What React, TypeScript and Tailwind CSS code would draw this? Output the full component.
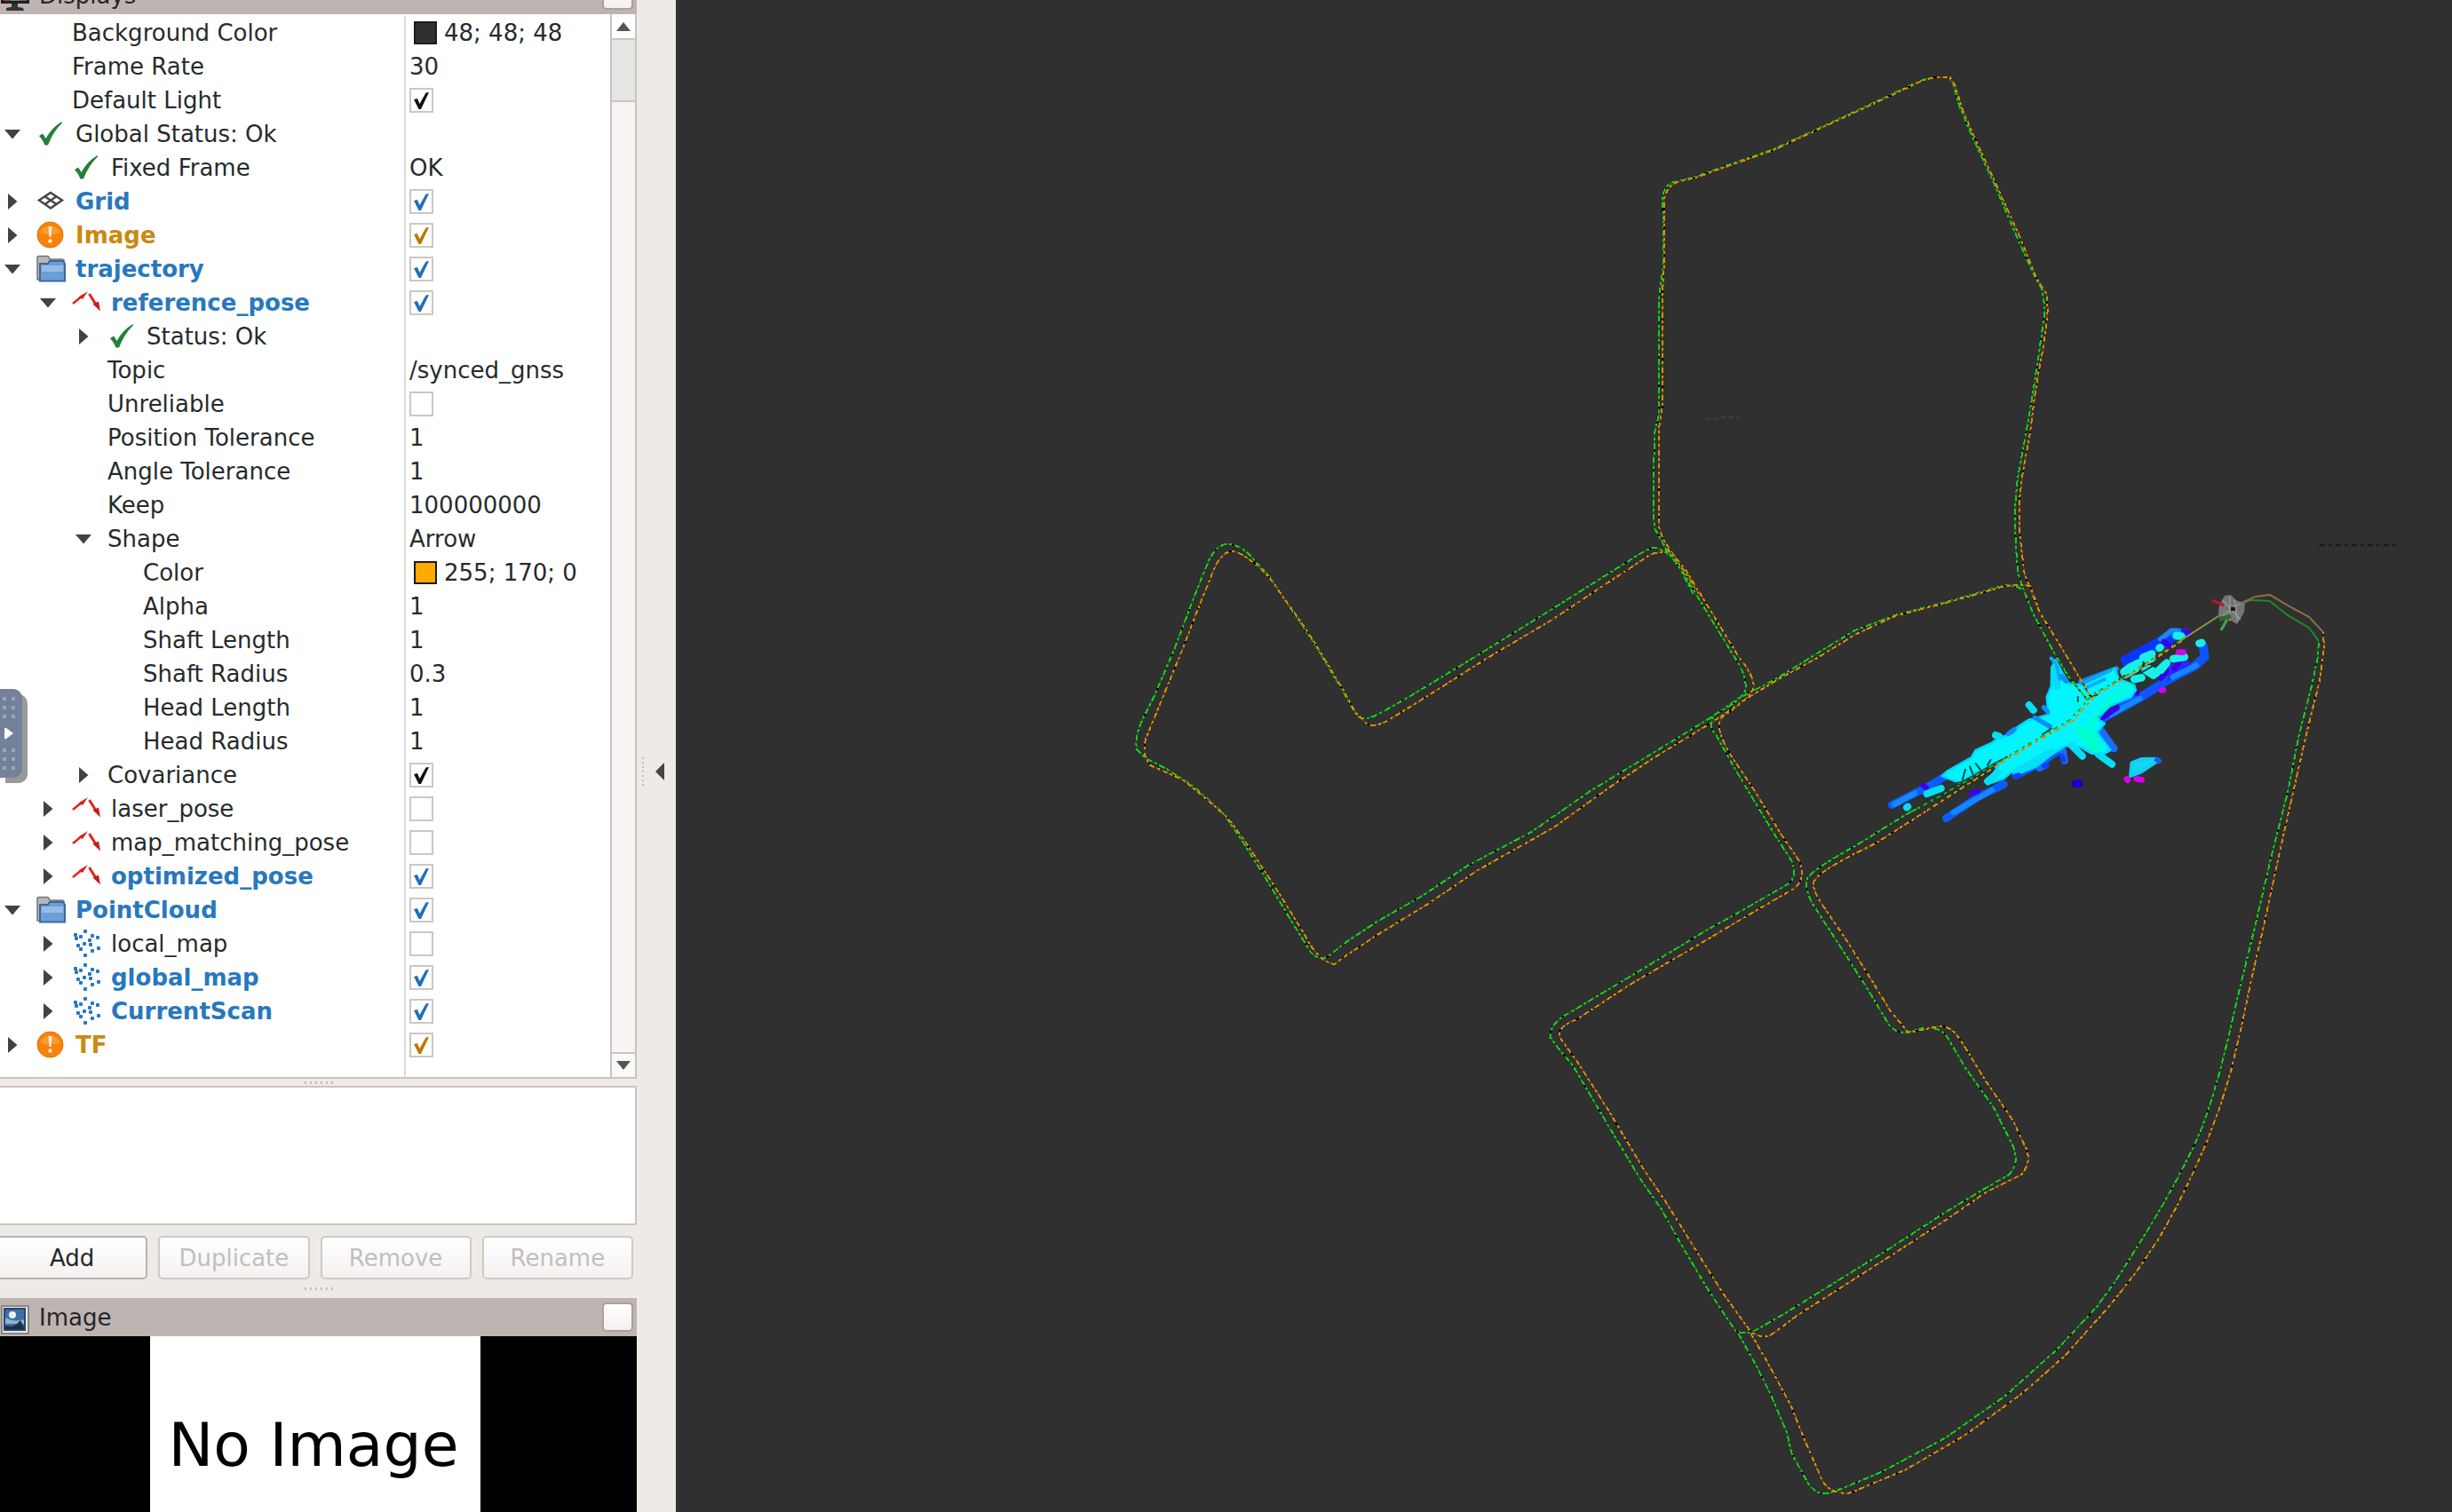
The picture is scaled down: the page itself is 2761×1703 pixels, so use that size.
import { useState } from "react";
import type { ReactNode } from "react";

type IconName = "ok" | "grid" | "warn" | "folder" | "pose" | "cloud";
type Tone = "plain" | "blue" | "gold";
type Row = {
  name: string;
  depth: number;
  icon?: IconName;
  open?: boolean;
  tone?: Tone;
  value?: string;
  swatch?: "dark" | "orange";
  checked?: boolean;
};

const rows: Row[] = [
  { name: "Background Color", depth: 1, value: "48; 48; 48", swatch: "dark" },
  { name: "Frame Rate", depth: 1, value: "30" },
  { name: "Default Light", depth: 1, checked: true },
  { name: "Global Status: Ok", depth: 0, icon: "ok", open: true },
  { name: "Fixed Frame", depth: 1, icon: "ok", value: "OK" },
  { name: "Grid", depth: 0, icon: "grid", open: false, tone: "blue", checked: true },
  { name: "Image", depth: 0, icon: "warn", open: false, tone: "gold", checked: true },
  { name: "trajectory", depth: 0, icon: "folder", open: true, tone: "blue", checked: true },
  { name: "reference_pose", depth: 1, icon: "pose", open: true, tone: "blue", checked: true },
  { name: "Status: Ok", depth: 2, icon: "ok", open: false },
  { name: "Topic", depth: 2, value: "/synced_gnss" },
  { name: "Unreliable", depth: 2, checked: false },
  { name: "Position Tolerance", depth: 2, value: "1" },
  { name: "Angle Tolerance", depth: 2, value: "1" },
  { name: "Keep", depth: 2, value: "100000000" },
  { name: "Shape", depth: 2, open: true, value: "Arrow" },
  { name: "Color", depth: 3, value: "255; 170; 0", swatch: "orange" },
  { name: "Alpha", depth: 3, value: "1" },
  { name: "Shaft Length", depth: 3, value: "1" },
  { name: "Shaft Radius", depth: 3, value: "0.3" },
  { name: "Head Length", depth: 3, value: "1" },
  { name: "Head Radius", depth: 3, value: "1" },
  { name: "Covariance", depth: 2, open: false, checked: true },
  { name: "laser_pose", depth: 1, icon: "pose", open: false, checked: false },
  { name: "map_matching_pose", depth: 1, icon: "pose", open: false, checked: false },
  { name: "optimized_pose", depth: 1, icon: "pose", open: false, tone: "blue", checked: true },
  { name: "PointCloud", depth: 0, icon: "folder", open: true, tone: "blue", checked: true },
  { name: "local_map", depth: 1, icon: "cloud", open: false, checked: false },
  { name: "global_map", depth: 1, icon: "cloud", open: false, tone: "blue", checked: true },
  { name: "CurrentScan", depth: 1, icon: "cloud", open: false, tone: "blue", checked: true },
  { name: "TF", depth: 0, icon: "warn", open: false, tone: "gold", checked: true },
];

const indents = ["pl-0", "pl-[40px]", "pl-[80px]", "pl-[120px]"];
const toneText: Record<Tone, string> = {
  plain: "text-[#262b2b]",
  blue: "font-bold text-[#2878bd]",
  gold: "font-bold text-[#c98a12]",
};
const toneTick: Record<Tone, string> = {
  plain: "text-[#101010]",
  blue: "text-[#1f70b8]",
  gold: "text-[#bd7800]",
};

function RowIcon({ name }: { name: IconName }) {
  const box = "block h-[32px] w-[34px] shrink-0";
  switch (name) {
    case "ok":
      return (
        <svg viewBox="0 0 34 32" className={box} aria-hidden="true">
          <path d="M3 18 L7 15.500 Q9 18 10.500 21 Q17 9 28.500 2 L29 3.500 Q19 13 13 28.500 L9.500 28.500 Q7 22 3 18 Z" fill="#25803a" />
        </svg>
      );
    case "grid":
      return (
        <svg viewBox="0 0 34 32" className={box} aria-hidden="true">
          <path d="M16 6 L29 14.500 L16 23.500 L3 14.500 Z M9.500 10.200 L22.500 19 M22.500 10.200 L9.500 19" fill="none" stroke="#454545" strokeWidth="2.400" />
        </svg>
      );
    case "warn":
      return (
        <svg viewBox="0 0 34 32" className={box} aria-hidden="true">
          <circle cx="15.500" cy="15.500" r="14.500" fill="#f98308" stroke="#e0720c" />
          <path d="M4 13 A12.500 12.500 0 0 1 27 13 Q15.500 18 4 13 Z" fill="#fcaa4f" opacity="0.6" />
          <path d="M13.500 6 h4 l-0.800 12 h-2.400 Z" fill="#ffe9cf" />
          <circle cx="15.500" cy="22.500" r="2.200" fill="#ffe9cf" />
        </svg>
      );
    case "folder":
      return (
        <svg viewBox="0 0 34 32" className={box} aria-hidden="true">
          <path d="M1 28 V3 Q1 1.500 3 1.500 H12 Q14 1.500 15 5 H29 Q31 5 31 7 V28 Z" fill="#b9b8b2" stroke="#74747a" strokeWidth="1.500" />
          <path d="M4 29.500 V10 H13 L15 7 H30 L32 10 V29.500 Z" fill="#6c9ed8" stroke="#3c67a0" strokeWidth="2" />
          <path d="M6 12 H30 V19 H6 Z" fill="#a9c8ec" opacity="0.7" />
        </svg>
      );
    case "pose":
      return (
        <svg viewBox="0 0 34 32" className={box} aria-hidden="true">
          <path d="M1 17 L12 8" stroke="#e0241c" strokeWidth="2.500" />
          <path d="M7.500 9.500 L18 3 L12 12 Z" fill="#d8211a" />
          <path d="M19.500 6 L27 18" stroke="#e0241c" strokeWidth="3" />
          <path d="M23.500 17.500 L30 14.500 L32 25.500 Z" fill="#c41c18" />
        </svg>
      );
    case "cloud":
      return (
        <svg viewBox="0 0 34 32" className={box} aria-hidden="true">
          <g fill="#2678c4">
            {[
              [13, 0], [2, 4], [8, 6], [21, 5], [27, 7], [3, 8], [12, 14], [18, 10], [19, 15],
              [5, 16], [8, 20], [21, 22], [28, 19], [13, 27],
            ].map(([x, y]) => (
              <rect key={`${x}-${y}`} x={x} y={y} width="4" height="4" rx="1" />
            ))}
          </g>
        </svg>
      );
  }
}

function CheckBox({ label, initial, tone }: { label: string; initial: boolean; tone: Tone }) {
  const [on, setOn] = useState(initial);
  return (
    <span className="grid w-[27px] place-items-center">
      <input
        type="checkbox"
        aria-label={label}
        checked={on}
        onChange={() => setOn(!on)}
        className="col-start-1 row-start-1 h-[28px] w-[27px] appearance-none border-2 border-[#cbc8c2] bg-white"
      />
      {on && (
        <svg viewBox="0 0 27 28" className={`pointer-events-none col-start-1 row-start-1 h-[28px] w-[27px] ${toneTick[tone]}`} aria-hidden="true">
          <path d="M5 13 L9 12 L11.500 18 L18.500 5.500 L22 5 L13 24 L10.500 24 Z" fill="currentColor" />
        </svg>
      )}
    </span>
  );
}

function TreeRow({ row }: { row: Row }) {
  const [open, setOpen] = useState(row.open ?? false);
  const tone = row.tone ?? "plain";
  return (
    <tr className="h-[38px]">
      <th scope="row" className="p-0 text-left font-normal">
        <div className={`flex h-[38px] items-center ${indents[row.depth]}`}>
          {row.open === undefined ? (
            <span className="w-[41px] shrink-0" />
          ) : (
            <button type="button" aria-label={`Toggle ${row.name}`} aria-expanded={open} onClick={() => setOpen(!open)} className="flex w-[41px] shrink-0 pl-1">
              <svg viewBox="0 0 20 20" className="h-[20px] w-[20px]" aria-hidden="true">
                {open ? <path d="M1 5 H19 L10 15.500 Z" fill="#424242" /> : <path d="M5 1 V19 L15.500 10 Z" fill="#424242" />}
              </svg>
            </button>
          )}
          {row.icon && (
            <span className="mr-[10px]">
              <RowIcon name={row.icon} />
            </span>
          )}
          <span className={`whitespace-nowrap ${toneText[tone]}`}>{row.name}</span>
        </div>
      </th>
      <td className="border-l-2 border-[#dcdcdc] p-0 pl-[4px]">
        <div className="flex items-center">
          {row.swatch === "dark" && <span className="mr-[8px] ml-[5px] h-[26px] w-[26px] border-2 border-[#1c1c1c] bg-[#303030]" />}
          {row.swatch === "orange" && <span className="mr-[8px] ml-[5px] h-[26px] w-[26px] border-2 border-[#1c1c1c] bg-[#ffaa00]" />}
          {row.checked !== undefined && <CheckBox label={row.name} initial={row.checked} tone={tone} />}
          {row.value && <span className="whitespace-nowrap text-[#262b2b]">{row.value}</span>}
        </div>
      </td>
    </tr>
  );
}

function ScrollBar() {
  return (
    <div className="flex w-[28px] shrink-0 flex-col border-l-2 border-[#c9c4c1] bg-[#f8f4f4]">
      <button type="button" aria-label="Scroll up" className="flex h-[27px] shrink-0 items-center justify-center bg-white">
        <svg viewBox="0 0 16 10" className="h-[10px] w-[16px]" aria-hidden="true">
          <path d="M0 10 H16 L8 0 Z" fill="#555" />
        </svg>
      </button>
      <div className="h-[72px] shrink-0 border-y-2 border-[#c9c7c4] bg-[#e5e5e4]" />
      <div className="grow" />
      <button type="button" aria-label="Scroll down" className="flex h-[28px] shrink-0 items-center justify-center border-t-2 border-[#c9c4c1] bg-[#faf9f8]">
        <svg viewBox="0 0 16 10" className="h-[10px] w-[16px]" aria-hidden="true">
          <path d="M0 0 H16 L8 10 Z" fill="#555" />
        </svg>
      </button>
    </div>
  );
}

function Grip() {
  return (
    <div className="flex justify-center gap-[4px]">
      {[0, 1, 2, 3, 4, 5].map((i) => (
        <span key={i} className="h-[3px] w-[2px] bg-[#c3bfbb]" />
      ))}
    </div>
  );
}

function DockHeader({ title, icon }: { title: string; icon: ReactNode }) {
  return (
    <div className="flex h-[43px] shrink-0 items-center bg-[#beb4b2] pr-[4px]">
      {icon}
      <h2 className="grow pl-[8px] text-[#262626]">{title}</h2>
      <button type="button" aria-label={`Close ${title}`} className="h-[33px] w-[35px] rounded-[5px] border-2 border-[#aaa19e] bg-linear-to-b from-white to-[#f3f0ef]" />
    </div>
  );
}

const tracks: { d: string; g?: boolean; soft?: boolean }[] = [
  // northern loop
  { g: true, d: "M1907 669 L1886 629 L1878 621 L1864 596 L1862 582 L1862 540 L1864 485 L1868 469 L1868 339 L1870 323 L1873 303 L1874 248 L1872 228 Q1873 206 1888 205 L1911 199 L1950 185 L1996 169 L2050 144 L2104 119 L2157 94 Q2172 86 2195 87 L2200 97 L2207 121 L2221 154 L2246 208 L2273 271 L2291 311 L2300 327 L2303 350 L2299 378 L2295 406 L2289 445 L2280 497 L2272 540 L2269 572 L2270 615 L2273 647 L2279 665 L2290 692 L2312 733 L2330 763 L2352 790" },
  { d: "M1914 669 L1886 627 L1873 607 L1868 592 L1868 485 L1872 460 L1872 339 L1874 303 L1874 228 Q1876 210 1890 205 L1911 200 L1950 186 L1996 170 L2050 145 L2104 120 L2157 95 Q2174 86 2196 87 L2202 97 L2209 121 L2223 154 L2248 208 L2275 268 L2293 313 L2305 332 L2306 350 L2302 386 L2296 418 L2291 449 L2286 489 L2278 532 L2274 564 L2274 596 L2277 623 L2280 647 L2288 667 L2297 690 L2320 727 L2344 767 L2355 786" },
  // western loop
  { g: true, d: "M1880 625 Q1868 616 1860 617 L1847 624 L1750 685 L1663 739 L1587 785 L1559 801 Q1535 815 1528 805 L1513 779 L1480 724 L1462 697 L1429 648 L1413 631 Q1398 613 1383 613 Q1371 613 1362 631 L1345 673 L1324 729 L1301 783 L1286 813 Q1278 832 1281 844 L1291 854 L1316 867 L1345 886 L1378 916 L1398 945 L1424 986 L1454 1036 L1472 1065 Q1480 1082 1495 1078 L1515 1062 L1551 1038 L1602 1009 L1653 975 L1725 937 L1791 891 L1852 854 L1924 810 L1959 786 L2000 765 L2040 740 L2089 710 L2134 693 L2192 678 L2245 663 Q2265 655 2279 665" },
  { d: "M1880 620 L1860 624 L1801 663 L1750 697 L1674 742 L1592 794 L1561 813 Q1545 820 1538 814 L1526 801 L1513 777 L1481 724 L1463 697 L1431 652 L1421 641 Q1396 620 1388 621 Q1374 622 1365 648 L1350 685 L1332 732 L1311 783 L1291 832 Q1286 850 1296 862 L1332 878 L1357 898 L1383 921 L1403 948 L1439 1003 L1470 1053 Q1484 1082 1503 1086 L1515 1077 L1556 1050 L1607 1019 L1663 981 L1709 955 L1750 932 L1811 888 L1862 854 L1926 815 L1970 785 L2005 764 L2045 742 L2089 715 L2134 694 L2192 679 L2245 664 Q2262 657 2286 660 L2295 683" },
  // central connector and southern block
  { g: true, d: "M1875 618 L1893 641 L1924 692 L1954 741 Q1967 760 1966 776 Q1964 788 1934 803 Q1920 814 1934 830 L1954 866 L1975 901 L2000 942 L2018 970 Q2025 988 2013 996 L1954 1030 L1923 1047 L1834 1101 L1767 1141 Q1746 1152 1746 1168 L1758 1184 L1771 1199 L1807 1260 L1847 1327 L1872 1363 L1892 1399 L1923 1451 L1954 1498 Q1965 1504 1977 1498 L2012 1478 L2128 1406 L2191 1365 L2236 1338 L2262 1323 Q2275 1310 2267 1291 L2245 1247 L2213 1202 L2193 1168 Q2184 1154 2160 1159 Q2140 1168 2128 1155 L2102 1112 L2079 1076 L2044 1022 Q2032 1003 2035 990 Q2040 980 2089 953 L2147 917 L2161 910" },
  { d: "M1878 618 L1898 641 L1929 692 L1959 741 Q1976 762 1975 774 Q1974 784 1939 808 Q1930 818 1949 850 L1975 889 L2005 938 L2026 969 Q2035 990 2020 1001 L1970 1030 L1923 1058 L1834 1110 L1776 1148 Q1750 1158 1758 1170 L1776 1195 L1812 1251 L1852 1318 L1874 1350 L1910 1408 L1941 1457 L1972 1500 Q1985 1508 1995 1503 L2026 1480 L2128 1415 L2191 1374 L2236 1343 L2276 1323 Q2288 1310 2282 1294 L2267 1262 L2236 1217 L2207 1170 Q2196 1154 2182 1156 L2149 1163 L2128 1137 L2106 1101 L2079 1058 L2053 1020 Q2037 996 2045 990 Q2050 980 2112 950 L2170 913" },
  // outer south-eastern arc
  { g: true, d: "M1958 1502 L1977 1536 L1995 1572 L2012 1612 L2018 1637 L2035 1668 Q2044 1683 2057 1682 L2075 1676 L2120 1657 L2191 1619 L2258 1572 L2316 1520 L2361 1472 L2384 1440 L2415 1391 L2436 1356 L2452 1327 L2469 1294 L2480 1269 L2490 1240 L2499 1209 L2508 1174 L2520 1122 L2529 1085 L2539 1045 L2558 963 L2576 893 L2589 827 L2603 773 L2610 740 L2611 722" },
  { d: "M1972 1502 L1990 1533 L2017 1583 L2033 1623 L2048 1657 Q2056 1684 2084 1681 L2146 1655 L2213 1616 L2280 1567 L2325 1527 L2370 1477 L2385 1459 L2408 1429 L2431 1395 L2452 1357 L2470 1320 L2485 1286 L2500 1246 L2512 1207 L2524 1156 L2537 1095 L2548 1048 L2567 960 L2585 880 L2598 823 L2612 767 L2617 730 L2616 712" },
  // turn next to the vehicle
  { g: true, soft: true, d: "M2522 680 L2536 676 L2556 677 L2576 693 L2600 707 L2611 722" },
  { soft: true, d: "M2522 680 L2540 672 L2556 670 L2576 682 L2600 695 L2616 712" },
];

function PointCloud() {
  return (
    <g transform="translate(2110 690) scale(0.3333)" strokeLinecap="round" strokeLinejoin="round" fill="none">
      {/* far ends of the scan */}
      <path d="M62 650 L180 590 L330 500 M245 695 L350 625 L440 580 M480 550 L560 510 L620 470" stroke="#0a5cff" strokeWidth="26" />
      <path d="M838 155 L985 75 L1015 58 L1062 60 L1070 75 L1045 72 L990 112 L850 178 Z" fill="#0a35ff" stroke="#0a35ff" strokeWidth="10" />
      <path d="M770 358 L850 315 L920 275 L985 232 L1085 180 L1118 150 L1112 110" stroke="#0d55ff" strokeWidth="30" />
      <path d="M1000 185 L1050 165 L1070 180 L1000 222 Z" fill="#2a2cff" stroke="#2a2cff" strokeWidth="14" />
      <path d="M970 90 L1005 62 L1030 62 M70 648 L140 610 M270 675 L400 600 M800 345 L900 290 M1010 218 L1090 178 M700 235 L820 190 M460 408 L530 365" stroke="#1688ff" strokeWidth="18" />
      <path d="M980 98 L1000 112 M770 357 L822 322 M330 612 L352 603 M1050 66 L1068 70 M990 200 L970 222 M1030 172 L1015 190 M875 268 L890 272 M168 584 L178 592" stroke="#3c00e6" strokeWidth="18" />
      <path d="M770 400 L812 460 M640 470 L645 500 M560 525 L580 515" stroke="#1a6dff" strokeWidth="24" />
      {/* dense centre */}
      <path d="M232 552 L250 535 L330 490 L345 465 L400 440 L420 425 L470 408 L490 385 L520 365 L590 345 L585 285 L600 250 L602 185 L615 160 L635 200 L660 240 L700 245 L760 215 L815 188 L828 225 L880 245 L885 262 L870 285 L800 315 L750 355 L780 375 L755 405 L800 465 L770 480 L735 475 L700 455 L650 450 L600 480 L550 520 L500 540 L470 535 L440 560 L385 580 L430 500 L340 545 L290 575 Z" fill="#00f5ff" stroke="#00d8ff" strokeWidth="8" />
      <path d="M180 612 L228 594 M112 658 L116 656 M525 312 L540 330 M385 570 L420 540 M670 450 L705 485 M760 480 L805 512 M480 540 L600 470 M610 190 L620 250 M412 414 L424 418" stroke="#08ddf8" strokeWidth="24" />
      <path d="M600 155 L618 175 L628 225 M705 240 L800 195 M715 255 L780 225" stroke="#0aa8ff" strokeWidth="12" />
      <path d="M845 200 L865 185 L895 170 M850 210 L885 190 M880 225 L905 220 M918 195 L945 212 L985 175 M930 190 L955 205 M910 152 L940 140 M925 160 L940 155 M965 120 L968 118 M1022 78 L1040 80 M1100 104 L1108 102 M1012 156 L1050 150 M970 195 L990 170" stroke="#16f0e6" strokeWidth="26" />
      <path d="M872 508 L905 495 L950 494 L958 502 L900 540 L868 552 Z" fill="#12d8f5" stroke="#14ccf5" strokeWidth="12" />
      <path d="M957 497 L963 501" stroke="#1a60ff" strokeWidth="18" />
      <path d="M690 390 L750 460 L720 400 L800 290 L860 250" stroke="#00ffc8" strokeWidth="26" opacity="0.6" />
      <path d="M670 380 L755 400 L770 470 L740 470 L700 430 Z" fill="#00ffc0" opacity="0.6" />
      <path d="M545 355 L595 385 M575 320 L588 335 M455 410 L475 395 M635 215 L650 232" stroke="#0b8cff" strokeWidth="16" />
      <path d="M855 562 L858 566 M888 562 L905 565 M972 262 L978 262 M1030 134 L1046 134" stroke="#d800ec" strokeWidth="20" />
      <path d="M682 578 L695 578" stroke="#1500cf" strokeWidth="26" />
      <path d="M575 518 L585 515 M636 485 L642 498 M480 552 L490 550" stroke="#1040ff" strokeWidth="18" />
      {/* gaps along the road */}
      <path d="M250 582 L300 572 L340 550 L400 515 L450 488 M300 565 L310 530 M335 545 L325 520 M360 530 L345 510 M385 515 L395 498 M570 412 L600 392 M690 285 L690 300 M735 285 L755 278 M830 225 L850 212 M900 205 L970 165 M905 245 L935 240" stroke="#12463c" strokeWidth="6" />
      <path d="M130 668 L250 610 L330 576 L390 540" stroke="#22382c" strokeWidth="16" />
    </g>
  );
}

function Vehicle() {
  return (
    <g fill="none">
      <path d="M2505 671 L2512 670 L2518 676 L2528 680 L2527 690 L2519 703 L2509 697 L2498 694 L2499 682 Z" fill="#7d7d7d" opacity="0.9" />
      <path d="M2503 676 L2523 698 M2522 680 L2503 694 M2511 672 L2511 700 M2516 676 L2520 700" stroke="#a3a3a3" strokeWidth="1" />
      <path d="M2512 684 h5 v4 h-5 Z" fill="#151515" />
      <path d="M2491 676 L2504 682" stroke="#c01824" strokeWidth="3" />
      <path d="M2510 694 L2501 710" stroke="#4f9e54" strokeWidth="3" />
      <path d="M2499 698 L2512 694" stroke="#2c6a2c" strokeWidth="5" />
    </g>
  );
}

function Viewport() {
  return (
    <svg viewBox="762 0 1999 1703" preserveAspectRatio="xMidYMid slice" className="absolute inset-0 h-full w-full" role="img" aria-label="3D view of trajectories and point cloud">
      <PointCloud />
      <g fill="none" strokeWidth="2">
        {tracks.map((t, i) =>
          t.soft ? (
            <path key={i} d={t.d} stroke={t.g ? "#1f8a2a" : "#8f7040"} />
          ) : (
            <g key={i} shapeRendering="crispEdges">
              <path d={t.d} stroke={t.g ? "#1d5a1d" : "#5a431a"} strokeDasharray="26 3" />
              <path d={t.d} stroke="#050505" strokeDasharray="4 19 4 27 5 15" />
              <path d={t.d} stroke={t.g ? "#16cc1c" : "#d68d08"} strokeDasharray={t.g ? "6 3 3 3 7 3 3 4" : "5 3 3 3 6 4 3 4"} />
            </g>
          ),
        )}
        <path d="M2455 722 L2402 757 L2357 782 L2332 810 L2268 848 L2214 880 L2161 910 L2147 917" stroke="#2fa51c" strokeDasharray="5 4 3 5" shapeRendering="crispEdges" />
        <path d="M2457 722 L2404 757 L2359 784 L2334 812 L2270 849 L2218 882 L2170 913" stroke="#d68d08" strokeDasharray="4 4 6 4" shapeRendering="crispEdges" />
        <path d="M2520 680 L2455 722" stroke="#7f9440" />
        <path d="M1920 472 h12 l6 -2 h20" stroke="#5a3a46" strokeDasharray="6 3" opacity="0.8" />
        <path d="M2612 614 H2700" stroke="#17171e" strokeDasharray="6 4 3 5" />
      </g>
      <Vehicle />
    </svg>
  );
}

const actions = [
  { label: "Add", enabled: true },
  { label: "Duplicate", enabled: false },
  { label: "Remove", enabled: false },
  { label: "Rename", enabled: false },
];

export default function App() {
  return (
    <div className="relative flex h-screen overflow-hidden bg-[#eeeae6] font-['DejaVu_Sans',sans-serif] text-[26px] leading-[38px]">
      <aside className="flex w-[717px] shrink-0 flex-col">
        <section className="-mt-[27px] shrink-0">
          <DockHeader
            title="Displays"
            icon={
              <svg viewBox="0 0 36 40" className="h-[40px] w-[36px]" aria-hidden="true">
                <rect x="1" y="2" width="32" height="27" fill="#1f1f1f" />
                <path d="M4 5 H12 V26 H4 Z" fill="#b73a4a" />
                <path d="M12 5 H22 V26 H12 Z" fill="#4f9a58" />
                <path d="M22 5 H30 V26 H22 Z" fill="#6a55b8" />
                <path d="M13 29 H20 V33 H13 Z M7 34 Q16 31 26 34 L27 37 H7 Z" fill="#333" />
              </svg>
            }
          />
          <div className="flex border-r-2 border-b-2 border-[#c9c4c1] bg-white">
            <div className="grow pt-[2px]">
              <table className="w-full table-fixed border-collapse">
                <colgroup>
                  <col className="w-[456px]" />
                  <col />
                </colgroup>
                <tbody>
                  {rows.map((r) => (
                    <TreeRow key={r.name} row={r} />
                  ))}
                  <tr className="h-[17px]">
                    <td className="p-0" />
                    <td className="border-l-2 border-[#dcdcdc] p-0" />
                  </tr>
                </tbody>
              </table>
            </div>
            <ScrollBar />
          </div>
        </section>

        <div className="flex h-[8px] shrink-0 flex-col justify-center">
          <Grip />
        </div>
        <div className="h-[157px] shrink-0 border-y-2 border-r-2 border-[#c9c4c1] bg-white" />
        <div className="-ml-[4px] flex shrink-0 gap-[12px] pt-[12px] pr-[4px]">
          {actions.map((a) => (
            <button
              key={a.label}
              type="button"
              disabled={!a.enabled}
              className="h-[49px] flex-1 rounded-[5px] border-2 border-[#b9b3af] bg-linear-to-b from-white to-[#f5f1f1] text-[#262626] disabled:border-[#cfcac6] disabled:text-[#c2bfbd]"
            >
              {a.label}
            </button>
          ))}
        </div>
        <div className="flex h-[21px] shrink-0 flex-col justify-center">
          <Grip />
        </div>

        <section className="flex min-h-0 grow flex-col">
          <DockHeader
            title="Image"
            icon={
              <svg viewBox="0 0 36 40" className="h-[40px] w-[36px]" aria-hidden="true">
                <rect x="2" y="7" width="30" height="31" fill="#e9e9e9" stroke="#8b8783" strokeWidth="2" />
                <rect x="5" y="10" width="23" height="24" fill="#3f6fa6" stroke="#24456e" strokeWidth="2" />
                <path d="M6 20 Q16 26 27 22 V27 H6 Z" fill="#8fb3d6" />
                <circle cx="14" cy="17" r="4" fill="#e8f0f8" />
                <path d="M6 33 V29 L13 30 L18 28 L23 23 L27 31 V33 Z" fill="#1f2f45" />
              </svg>
            }
          />
          <div className="flex grow justify-center bg-black pr-[7px]">
            <div className="flex w-[372px] flex-col items-center bg-white pt-[75px] pr-[4px]">
              <p className="text-[68px] leading-[96px] whitespace-nowrap text-black">No Image</p>
            </div>
          </div>
        </section>
      </aside>

      <div className="flex w-[44px] shrink-0 items-center gap-[13px] pt-[35px] pl-[6px]">
        <div className="flex flex-col gap-[3px]">
          {[0, 1, 2, 3, 4, 5, 6].map((i) => (
            <span key={i} className="h-[2px] w-[2px] bg-[#bfbbb7]" />
          ))}
        </div>
        <button type="button" aria-label="Hide left dock" className="flex">
          <svg viewBox="0 0 10 20" className="h-[20px] w-[10px]" aria-hidden="true">
            <path d="M10 0 V20 L0 10 Z" fill="#444" />
          </svg>
        </button>
      </div>

      <main className="relative grow bg-[#303030]">
        <Viewport />
      </main>

      <button type="button" aria-label="Open control bar" className="absolute top-[776px] left-0 flex h-[100px] w-[25px] flex-col items-center justify-center gap-[10px] rounded-r-[10px] bg-[#748299] pr-[5px] shadow-[6px_6px_0_#999999]">
        {[0, 1].map((k) => (
          <span key={k} className={k === 0 ? "order-1 grid grid-cols-2 gap-[6px]" : "order-3 grid grid-cols-2 gap-[6px]"}>
            {[0, 1, 2, 3, 4, 5].map((i) => (
              <span key={i} className="h-[4px] w-[4px] bg-[#9ba6b9]" />
            ))}
          </span>
        ))}
        <svg viewBox="0 0 12 14" className="order-2 h-[14px] w-[12px]" aria-hidden="true">
          <path d="M1 2 Q1 0 3 1 L11 7 L3 13 Q1 14 1 12 Z" fill="#fff" />
        </svg>
      </button>
    </div>
  );
}
